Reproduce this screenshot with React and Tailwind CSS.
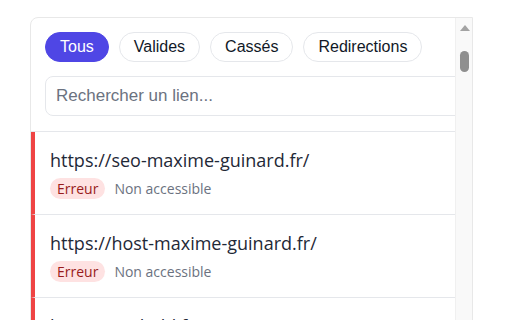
import React from "react";

const filtres = ["Tous", "Valides", "Cassés", "Redirections"];

const liens = [
  { url: "https://seo-maxime-guinard.fr/", statut: "Erreur", detail: "Non accessible" },
  { url: "https://host-maxime-guinard.fr/", statut: "Erreur", detail: "Non accessible" },
  { url: "https://ontheld.fr/", statut: "Erreur", detail: "Non accessible" },
];

export default function App() {
  return (
    <div className="w-[512px] h-[320px] bg-white overflow-hidden pl-[30px] pt-[17px]">
      <div className="flex w-[443px] h-[320px] border border-[#e8e8e8] rounded-tl-lg overflow-hidden bg-white">
        {/* contenu */}
        <div className="w-[424px] shrink-0 overflow-hidden">
          <div className="px-[14px] pt-[14px] pb-[15px] border-b border-[#e5e7eb] font-['Liberation_Sans',Arial,sans-serif]">
            <div className="flex gap-[10px]">
              {filtres.map((f, i) => (
                <button
                  key={f}
                  className={
                    i === 0
                      ? "h-[30px] px-[14px] rounded-full bg-[#4f46e5] text-white text-base border border-[#4f46e5]"
                      : "h-[30px] px-[14px] rounded-full bg-white text-[#111827] text-base border border-[#e5e7eb]"
                  }
                >
                  {f}
                </button>
              ))}
            </div>
            <div className="mt-[14px] w-[440px] h-[40px] border border-[#e5e7eb] rounded-lg flex items-center px-[10px] text-[17px] text-[#6b7280]">
              Rechercher un lien...
            </div>
          </div>

          <div className="font-['Open_Sans',sans-serif]">
            {liens.map((l) => (
              <div
                key={l.url}
                className="border-l-4 border-l-[#ef4444] border-b border-b-[#e5e7eb] pl-[15px] pt-[15px] pb-[15px]"
              >
                <div className="text-[18px] leading-[26px] text-[#1f2937]">{l.url}</div>
                <div className="mt-[5px] flex items-center gap-[9px]">
                  <span className="h-[21px] px-[7px] rounded-full bg-[#fee2e2] text-[#991b1b] text-sm font-medium leading-[21px]">
                    {l.statut}
                  </span>
                  <span className="text-sm text-[#6b7280]">{l.detail}</span>
                </div>
              </div>
            ))}
          </div>
        </div>

        {/* barre de défilement */}
        <div className="w-[18px] shrink-0 bg-[#f9f9f9] border-l border-[#f0f0f0] flex flex-col items-center pt-[7px]">
          <svg width="10" height="6" viewBox="0 0 10 6">
            <path d="M5 0 L10 6 L0 6 Z" fill="#a3a3a3" />
          </svg>
          <div className="mt-[20px] w-[9px] h-[21px] rounded-full bg-[#8f8f8f]" />
        </div>
      </div>
    </div>
  );
}
